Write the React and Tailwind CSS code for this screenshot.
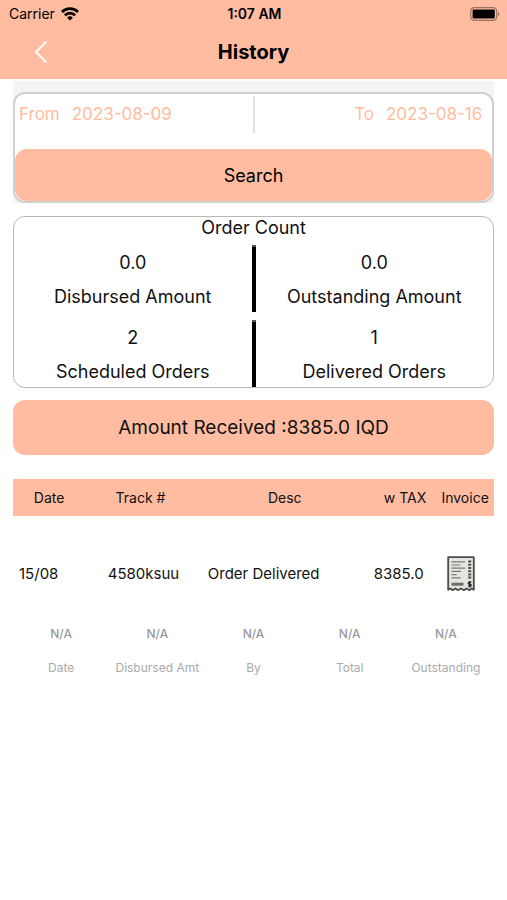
import React, { useState } from 'react';

const counts = [
  [
    { value: '0.0', label: 'Disbursed Amount' },
    { value: '0.0', label: 'Outstanding Amount' },
  ],
  [
    { value: '2', label: 'Scheduled Orders' },
    { value: '1', label: 'Delivered Orders' },
  ],
];

const orders = [
  { date: '15/08', track: '4580ksuu', desc: 'Order Delivered', total: '8385.0' },
];

const summary = [
  { value: 'N/A', label: 'Date' },
  { value: 'N/A', label: 'Disbursed Amt' },
  { value: 'N/A', label: 'By' },
  { value: 'N/A', label: 'Total' },
  { value: 'N/A', label: 'Outstanding' },
];

const WifiIcon = () => (
  <svg viewBox="0 0 18 14" className="h-[14px] w-[18px]" aria-hidden="true">
    <g fill="none" stroke="#000" strokeWidth="2.8">
      <path d="M0.9 5a11.5 11.5 0 0 1 16.2 0" />
      <path d="M3.9 8.3a7.2 7.2 0 0 1 10.2 0" />
    </g>
    <path d="M9 13.6 6.1 10.7a4.1 4.1 0 0 1 5.8 0z" />
  </svg>
);

const BatteryIcon = () => (
  <svg viewBox="0 0 30 14" className="h-[14px] w-[30px]" aria-hidden="true">
    <rect
      x="0.7"
      y="0.7"
      width="26"
      height="12.6"
      rx="3.6"
      fill="none"
      stroke="#000"
      strokeOpacity="0.4"
      strokeWidth="1.2"
    />
    <rect x="2.6" y="2.6" width="22.2" height="8.8" rx="1.2" />
    <path d="M28 4.8v4.4c1.9-.8 1.9-3.6 0-4.4z" fillOpacity="0.4" />
  </svg>
);

const BackIcon = () => (
  <svg viewBox="0 0 14 24" className="h-6 w-[14px]" aria-hidden="true">
    <path d="M12.4 1.4 2 12l10.4 10.6" fill="none" stroke="#fff" strokeWidth="2" />
  </svg>
);

const ReceiptIcon = () => (
  <svg viewBox="0 0 28 36" className="h-9 w-7" aria-hidden="true">
    <path
      d="M1.2 1.2h25.6v32.6l-2.2-1.4-2.2 1.8-2.8-1.8-2.8 1.8-2.8-1.8-2.8 1.8-2.8-1.8-2.8 1.8-2.2-1.8-2.2 1.4z"
      fill="#e3e6dc"
      stroke="#4a4d4b"
      strokeWidth="1.8"
      strokeLinejoin="round"
    />
    <g stroke="#777b77" strokeWidth="1.2">
      <path d="M4.5 5.8H18M4.5 9H13.5M4.5 12.2H18M4.5 15.4H14M4.5 18.6H9.5M4.5 21.8H13.5" />
    </g>
    <path d="M22.7 4.6v19" stroke="#4a4d4b" strokeWidth="3" strokeDasharray="2 1.2" />
    <path d="M4.5 28.2h12" stroke="#6b6e6b" strokeWidth="3" />
    <path
      d="M24.4 26.2h-2.2c-1.4 0-1.4 2 0 2h1c1.4 0 1.4 2 0 2h-2.2M22.7 25v6.4"
      fill="none"
      stroke="#222"
      strokeWidth="1.2"
    />
  </svg>
);

const DateField = ({ id, label, value, onChange }) => (
  <div className="flex items-center gap-3">
    <label htmlFor={id}>{label}</label>
    <input
      id={id}
      type="text"
      value={value}
      onChange={(e) => onChange(e.target.value)}
      className="w-[100px] bg-transparent outline-none"
    />
  </div>
);

const CountCell = ({ value, label }) => (
  <div className="flex-1 pt-px text-center leading-[34px]">
    <p>{value}</p>
    <p>{label}</p>
  </div>
);

const App = () => {
  const [from, setFrom] = useState('2023-08-09');
  const [to, setTo] = useState('2023-08-16');

  return (
    <div className="min-h-screen bg-white font-[Inter,sans-serif] text-[17px] text-[#111]">
      <header className="bg-[#ffbca0] text-black">
        <div className="grid grid-cols-3 items-center pt-[3px] pr-[7px] pl-[9px] text-sm leading-[21px]">
          <div className="flex items-center gap-[6px]">
            <span>Carrier</span>
            <WifiIcon />
          </div>
          <span className="text-center font-semibold">1:07 AM</span>
          <div className="flex justify-end">
            <BatteryIcon />
          </div>
        </div>
        <div className="grid h-[55px] grid-cols-[1fr_auto_1fr] items-center">
          <button type="button" aria-label="Back" className="ml-[34px] w-fit">
            <BackIcon />
          </button>
          <h1 className="text-xl font-bold">History</h1>
        </div>
      </header>

      <main className="px-[13px]">
        <form
          className="mt-[2px] bg-[#f4f4f4] pt-[11px]"
          onSubmit={(e) => e.preventDefault()}
        >
          <div className="overflow-hidden rounded-xl border-2 border-[#d0d0d0] bg-white">
            <div className="flex pt-[2px] text-[#ffbca0]">
              <div className="flex h-[37px] flex-1 items-center">
                <div className="pl-1">
                  <DateField id="from" label="From" value={from} onChange={setFrom} />
                </div>
              </div>
              <div className="h-[37px] w-[2px] bg-[#e2e2e2]" />
              <div className="flex h-[37px] flex-1 items-center justify-end">
                <div className="pr-[6px]">
                  <DateField id="to" label="To" value={to} onChange={setTo} />
                </div>
              </div>
            </div>
            <button
              type="submit"
              className="mt-4 block h-[52px] w-full rounded-xl bg-[#ffbca0] pt-px text-lg text-black"
            >
              Search
            </button>
          </div>
        </form>

        <section className="mt-[13px] overflow-hidden rounded-xl border border-[#b8b8b8] text-lg">
          <h2 className="pb-[6px] text-center leading-[22px]">Order Count</h2>
          <div className="flex flex-col gap-2">
            {counts.map(([left, right]) => (
              <div key={left.label} className="flex h-[67px]">
                <CountCell value={left.value} label={left.label} />
                <div className="w-1 border-t-2 border-[#555] bg-black" />
                <CountCell value={right.value} label={right.label} />
              </div>
            ))}
          </div>
        </section>

        <p className="mt-3 rounded-xl bg-[#ffbca0] text-center text-[19px] leading-[55px]">
          Amount Received :8385.0 IQD
        </p>

        <table className="mt-6 w-full table-fixed text-[15px]">
          <thead>
            <tr className="h-[37px] bg-[#ffbca0] text-sm">
              <th className="w-[15%] font-normal">Date</th>
              <th className="w-[23%] font-normal">Track #</th>
              <th className="w-[37%] font-normal">Desc</th>
              <th className="w-[13%] font-normal">w TAX</th>
              <th className="w-[12%] font-normal">Invoice</th>
            </tr>
          </thead>
          <tbody>
            {orders.map((order) => (
              <tr key={order.track} className="h-[116px]">
                <td className="pl-[6px]">{order.date}</td>
                <td className="pl-[6px] text-center">{order.track}</td>
                <td className="pl-3">{order.desc}</td>
                <td className="pr-4 text-right">{order.total}</td>
                <td className="pr-2">
                  <button
                    type="button"
                    aria-label="Open invoice"
                    className="mx-auto block"
                  >
                    <ReceiptIcon />
                  </button>
                </td>
              </tr>
            ))}
          </tbody>
        </table>

        <dl className="-mt-[15px] grid grid-cols-5 text-center text-xs leading-[34px] text-[#aaa]">
          {summary.map((item) => (
            <div key={item.label} className="flex flex-col-reverse">
              <dt>{item.label}</dt>
              <dd className="font-medium text-[#999]">{item.value}</dd>
            </div>
          ))}
        </dl>
      </main>
    </div>
  );
};

export default App;
